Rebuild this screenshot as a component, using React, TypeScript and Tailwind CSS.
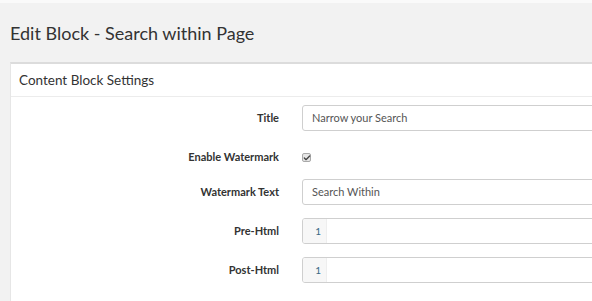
import { Check } from "lucide-react";

const font = { fontFamily: "Lato, 'Open Sans', sans-serif" };

export default function App() {
  return (
    <div
      className="h-[301px] w-[592px] overflow-hidden border-t-[3px] border-[#fafafa] bg-[#f2f2f2] text-[#333]"
      style={font}
    >
      <h1 className="px-[10px] pt-[20px] pb-[18px] text-[18px] leading-[21px] font-normal text-[#333]">
        Edit Block - Search within Page
      </h1>
      <div className="ml-[10px] h-[300px] w-[800px] border-t-2 border-l border-[#dcdcdc] border-l-[#e6e6e6] bg-white">
        <div className="flex h-[33px] items-center border-b border-[#ececec] px-[8px] text-[13.5px] text-[#333]">
          Content Block Settings
        </div>
        <div className="flex flex-col pt-[8px]">
          <Row label="Title">
            <TextInput value="Narrow your Search" />
          </Row>
          <Row label="Enable Watermark" compact>
            <div className="grid h-[9px] w-[9px] place-items-center rounded-[2px] border border-[#a9a9a9] bg-[#e6e6e6]">
              <Check className="h-[8px] w-[8px] text-[#444]" strokeWidth={4} />
            </div>
          </Row>
          <Row label="Watermark Text">
            <TextInput value="Search Within" />
          </Row>
          <Row label="Pre-Html">
            <CodeInput />
          </Row>
          <Row label="Post-Html">
            <CodeInput />
          </Row>
        </div>
      </div>
    </div>
  );
}

function Row({
  label,
  compact,
  children,
}: {
  label: string;
  compact?: boolean;
  children: React.ReactNode;
}) {
  return (
    <div className={"flex h-[26px] items-center " + (compact ? "mb-[9px]" : "mb-[13px]")}>
      <div className="w-[268px] text-right text-[11px] font-bold text-[#333]">{label}</div>
      <div className="ml-[23px] flex-1">{children}</div>
    </div>
  );
}

function TextInput({ value }: { value: string }) {
  return (
    <div className="flex h-[26px] items-center rounded-[3px] border border-[#cfcfcf] px-[9px] text-[11px] text-[#555]">
      {value}
    </div>
  );
}

function CodeInput() {
  return (
    <div className="flex h-[26px] overflow-hidden rounded-[3px] border border-[#cfcfcf]">
      <div className="flex w-[24px] items-center justify-end border-r border-[#eeeeee] bg-[#f7f7f7] pr-[5px] text-[10px] text-[#3b6a86]">
        1
      </div>
      <div className="flex-1" />
    </div>
  );
}
